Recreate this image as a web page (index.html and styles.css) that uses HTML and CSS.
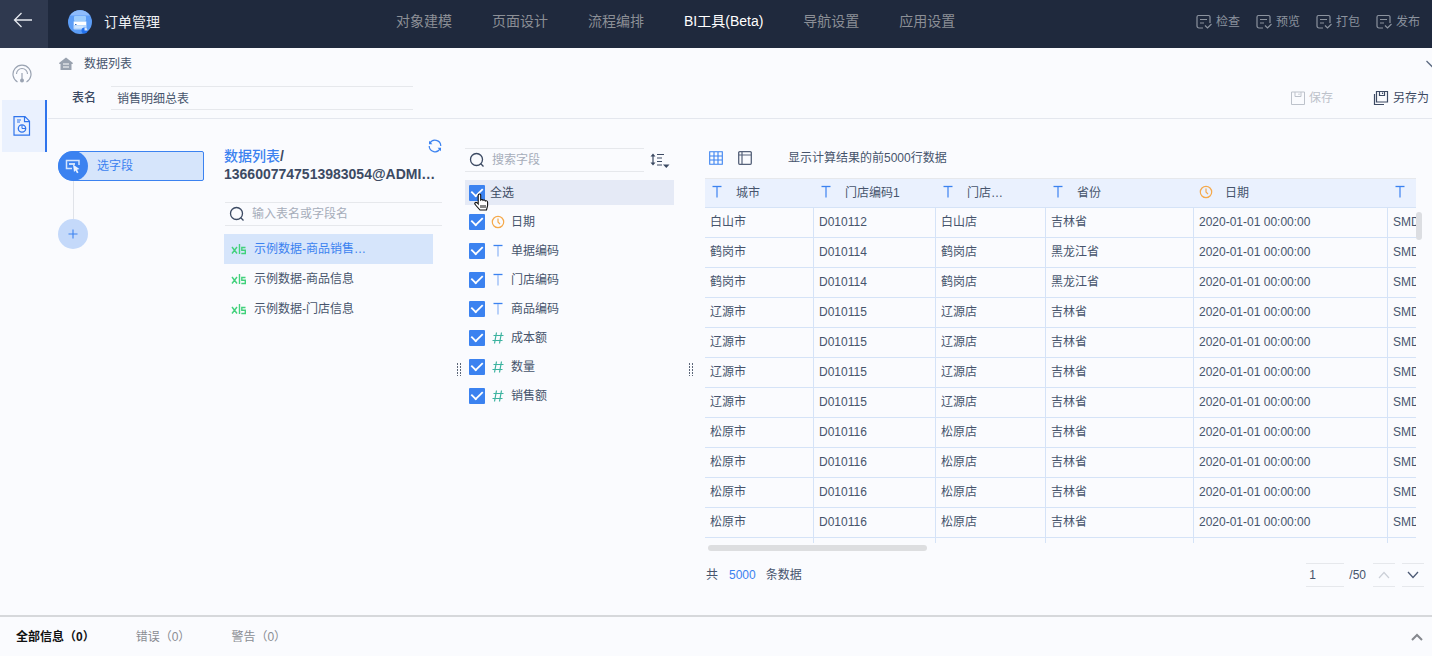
FILE: index.html
```html
<!DOCTYPE html>
<html lang="zh-CN">
<head>
<meta charset="utf-8">
<title>订单管理</title>
<link rel="stylesheet" href="styles.css">
</head>
<body>
<svg class="sprite" aria-hidden="true">
  <symbol id="i-check" viewBox="0 0 16 16"><path d="M7 14H3a2 2 0 0 1-2-2V3a1.500 1.500 0 0 1 1.500-1.500H12.500A1.500 1.500 0 0 1 14 3v6M4 5.500h7M4 9h4M9 11.500l2.500 2.500 4-4" fill="none" stroke="currentColor" stroke-width="1.200"/></symbol>
  <symbol id="i-t" viewBox="0 0 14 14"><path d="M2.500 1.500h9" stroke="#3b82f0" stroke-width="1.300"/><path d="M7 2V12.500" stroke="currentColor" stroke-width="1.200"/></symbol>
  <symbol id="i-hash" viewBox="0 0 14 14"><path d="M5.500 1.500l-2 11M10.500 1.500l-2 11M2.500 4.500h10M1.500 9.500h10" fill="none" stroke="#3db3a0" stroke-width="1.200"/></symbol>
  <symbol id="i-clock" viewBox="0 0 14 14"><circle cx="7" cy="7" r="5.700" fill="none" stroke="#f5a94b" stroke-width="1.200"/><path d="M7 3.500V7l2 2.200" fill="none" stroke="#f5a94b" stroke-width="1.200"/></symbol>
  <symbol id="i-search" viewBox="0 0 16 16"><circle cx="7.500" cy="7.500" r="6" fill="none" stroke="#3c4a63" stroke-width="1.300"/><path d="M11.800 11.800L14.500 14.500" stroke="#3c4a63" stroke-width="1.300"/></symbol>
  <symbol id="i-xls" viewBox="0 0 16 14"><path d="M1 5l5 6.500M6 5L1 11.500M8.500 2v10M14.500 5.500h-3.700v2.800h3.500v3.200h-4" fill="none" stroke="#42d17c" stroke-width="1.400"/></symbol>
</svg>

<header class="topbar">
  <div class="brand">
    <button class="back" aria-label="返回"><svg width="20" height="16" viewBox="0 0 20 16"><path d="M19 8H1.500M8.500 1L1.500 8l7 7" fill="none" stroke="#e6e9ef" stroke-width="1.300"/></svg></button>
    <svg class="logo" width="24" height="24" viewBox="0 0 24 24"><circle cx="12" cy="12" r="12" fill="#5c9df6"/><path d="M2 5.500a12 12 0 0 1 20 0z" fill="#8ebcfb"/><rect x="6" y="6" width="12" height="5" rx="1" fill="#9cccfc"/><rect x="5.500" y="11" width="13" height="8.500" rx="1" fill="#b9d9fd"/><path d="M6 13.500h12" stroke="#fff" stroke-width="3"/><path d="M7 14.500h1.500" stroke="#3b6fc4"/><path d="M6.500 17h9" stroke="#e6f2ff"/><circle cx="16.500" cy="20.500" r="3" fill="#2271ee"/><path d="M16.500 20.500v-3a3 3 0 0 1 3 3z" fill="#d8e8ff"/></svg>
    <span class="app-name">订单管理</span>
  </div>
  <nav class="nav">
    <a href="#">对象建模</a><a href="#">页面设计</a><a href="#">流程编排</a><a href="#" class="active">BI工具(Beta)</a><a href="#">导航设置</a><a href="#">应用设置</a>
  </nav>
  <div class="actions">
    <button><svg width="16" height="16"><use href="#i-check"/></svg>检查</button>
    <button><svg width="16" height="16"><use href="#i-check"/></svg>预览</button>
    <button><svg width="16" height="16"><use href="#i-check"/></svg>打包</button>
    <button><svg width="16" height="16"><use href="#i-check"/></svg>发布</button>
  </div>
</header>

<div class="body">
  <aside class="rail">
    <button aria-label="仪表盘"><svg width="20" height="20" viewBox="0 0 20 20"><path d="M5.500 18a9 9 0 1 1 9 0" fill="none" stroke="#9aa3b2" stroke-width="1.200"/><path d="M4.500 10a5.500 5.500 0 0 1 11 0" fill="none" stroke="#9aa3b2" stroke-width="1.100"/><path d="M10 9v7" stroke="#9aa3b2" stroke-width="1.200"/><circle cx="10" cy="16.500" r="2" fill="#9aa3b2"/></svg></button>
    <button class="current" aria-label="数据报表"><svg width="18" height="20" viewBox="0 0 18 20"><path d="M1 .7h11l4.500 4.500v14H1zM11.500 1v4.700h5M4 4h4M4 6h3" fill="none" stroke="#2f74ec" stroke-width="1.200"/><circle cx="9" cy="12.500" r="3.700" fill="none" stroke="#2f74ec" stroke-width="1.300"/><path d="M9 9v3.500h3.500" fill="none" stroke="#2f74ec"/></svg></button>
  </aside>

  <main class="content">
    <div class="crumb">
      <svg width="14" height="14" viewBox="0 0 14 14"><path d="M7 .5L14 6l-.5 1H12.500v6h-11V7H.5L0 6z" fill="#99a2af"/><path d="M4 7h6M4 10h6" fill="none" stroke="#fff"/></svg>
      <a href="#">数据列表</a>
      <svg class="crumb-more" width="6" height="8" viewBox="0 0 6 8"><path d="M.5 1l6 6" stroke="#5b6980" stroke-width="1.300"/></svg>
    </div>
    <div class="titlebar">
      <label for="tname">表名</label>
      <input id="tname" class="ruled" value="销售明细总表">
      <div class="save-group">
        <button class="save" disabled><svg width="14" height="14" viewBox="0 0 14 14"><path d="M.5 1h13v12.500H.5zM4 1v4.500h6V1M8 2.500v1.500" fill="none" stroke="currentColor"/></svg>保存</button>
        <button class="saveas"><svg width="16" height="16" viewBox="0 0 16 16"><path d="M3.500 1.500h11v10.500H3.500zM6.500 1.500v4h5v-4M9.500 2.500v1.500M1.500 4v10.500h9.500" fill="none" stroke="currentColor" stroke-width="1.200"/></svg>另存为</button>
      </div>
    </div>

    <div class="panels">
      <section class="steps">
        <button class="step"><span class="step-icon"><svg width="16" height="16" viewBox="0 0 16 16"><path d="M7 10.500H1.500V2.500h12.500V7" fill="none" stroke="#d5e5fd" stroke-width="1.500"/><path d="M4 6h6" stroke="#fff" stroke-width="1.500"/><path d="M8 6.500l6.500 4.500-2.500.7 1.500 2.800-1.500.8-1.500-2.800L9 14z" fill="#eaf2ff"/></svg></span>选字段</button>
        <span class="step-line"></span>
        <button class="step-add" aria-label="添加步骤"><svg width="10" height="10" viewBox="0 0 10 10"><path d="M5 .5v9M.5 5h9" stroke="#3b82f0" stroke-width="1.100"/></svg></button>
      </section>

      <section class="sources">
        <div class="source-head">
          <h2><a href="#">数据列表</a>/<span>1366007747513983054@ADMI…</span></h2>
          <button aria-label="刷新"><svg width="14" height="14" viewBox="0 0 14 14"><path d="M1.800 4.500A5.800 5.800 0 0 1 12.800 7M12.200 9.500A5.800 5.800 0 0 1 1.200 7M4.500 1.700" fill="none" stroke="#3b82f0" stroke-width="1.200"/><path d="M1 1.800v3.400h3.400zM13 12.200V8.800H9.600z" fill="#3b82f0"/></svg></button>
        </div>
        <label class="search ruled"><svg width="16" height="16"><use href="#i-search"/></svg><input type="text" placeholder="输入表名或字段名" aria-label="输入表名或字段名"></label>
        <ul class="files">
          <li><button class="picked"><svg width="16" height="14"><use href="#i-xls"/></svg>示例数据-商品销售…</button></li>
          <li><button><svg width="16" height="14"><use href="#i-xls"/></svg>示例数据-商品信息</button></li>
          <li><button><svg width="16" height="14"><use href="#i-xls"/></svg>示例数据-门店信息</button></li>
        </ul>
      </section>

      <div class="grip"><i></i></div>

      <section class="fields">
        <div class="field-tools">
          <label class="search ruled"><svg width="16" height="16"><use href="#i-search"/></svg><input type="text" placeholder="搜索字段" aria-label="搜索字段"></label>
          <button aria-label="排序"><svg width="20" height="16" viewBox="0 0 20 16"><path d="M3 3v9M7 2.500h7M7 6h5M7 9.500h5M7 13h5" stroke="#3c4a63" stroke-width="1.200"/><path d="M.5 4.500L3 1.500l2.500 3zM.5 10.500l2.500 3 2.500-3zM13 12.500h6.500l-3.200 3.500z" fill="#3c4a63"/></svg></button>
        </div>
        <label class="all"><input type="checkbox" checked>全选
          <svg class="cursor" width="16" height="18" viewBox="0 0 16 18"><path d="M4.200 10V2.200a1.200 1.200 0 0 1 2.500 0V7c.8-.8 2-.6 2.300.3.800-.6 2-.3 2.300.6.900-.5 2.300 0 2.300 1.300v3.500L12.500 17H6L2 12.500c-1.200-1.300-1.700-2.200-.8-2.800.8-.6 1.800-.2 3 1.300z" fill="#fff" stroke="#111" stroke-width="1.100"/><path d="M7 12v3M9 12v3M11 12v3" stroke="#111"/></svg>
        </label>
        <ul class="field-list">
          <li><label><input type="checkbox" checked><svg width="14" height="14"><use href="#i-clock"/></svg>日期</label></li>
          <li><label><input type="checkbox" checked><svg width="14" height="14"><use href="#i-t"/></svg>单据编码</label></li>
          <li><label><input type="checkbox" checked><svg width="14" height="14"><use href="#i-t"/></svg>门店编码</label></li>
          <li><label><input type="checkbox" checked><svg width="14" height="14"><use href="#i-t"/></svg>商品编码</label></li>
          <li><label><input type="checkbox" checked><svg width="14" height="14"><use href="#i-hash"/></svg>成本额</label></li>
          <li><label><input type="checkbox" checked><svg width="14" height="14"><use href="#i-hash"/></svg>数量</label></li>
          <li><label><input type="checkbox" checked><svg width="14" height="14"><use href="#i-hash"/></svg>销售额</label></li>
        </ul>
      </section>

      <div class="grip"><i></i></div>

      <section class="preview">
        <div class="view-tools">
          <button aria-label="表格视图"><svg width="14" height="14" viewBox="0 0 14 14"><path d="M.7.7h12.600v12.600H.7zM.7 5h12.600M.7 9h12.600M5 .7v12.600M9 .7v12.600" fill="none" stroke="#3b82f0" stroke-width="1.100"/></svg></button>
          <button aria-label="结构视图"><svg width="14" height="14" viewBox="0 0 14 14"><rect x=".7" y=".7" width="12.600" height="12.600" rx="1" fill="none" stroke="#56627a" stroke-width="1.300"/><path d="M.7 4h12.600M4 .7v12.600" stroke="#56627a" stroke-width="1.200"/></svg></button>
          <span>显示计算结果的前5000行数据</span>
        </div>
        <div class="table-view">
          <table>
            <colgroup><col class="c-city"><col class="c-code"><col class="c-store"><col class="c-prov"><col class="c-date"><col class="c-sku"></colgroup>
            <thead><tr>
              <th><svg width="14" height="14"><use href="#i-t"/></svg>城市</th>
              <th><svg width="14" height="14"><use href="#i-t"/></svg>门店编码1</th>
              <th><svg width="14" height="14"><use href="#i-t"/></svg>门店…</th>
              <th><svg width="14" height="14"><use href="#i-t"/></svg>省份</th>
              <th><svg width="14" height="14"><use href="#i-clock"/></svg>日期</th>
              <th><svg width="14" height="14"><use href="#i-t"/></svg></th>
            </tr></thead>
            <tbody>
              <tr><td>白山市</td><td>D010112</td><td>白山店</td><td>吉林省</td><td>2020-01-01 00:00:00</td><td>SMD</td></tr>
              <tr><td>鹤岗市</td><td>D010114</td><td>鹤岗店</td><td>黑龙江省</td><td>2020-01-01 00:00:00</td><td>SMD</td></tr>
              <tr><td>鹤岗市</td><td>D010114</td><td>鹤岗店</td><td>黑龙江省</td><td>2020-01-01 00:00:00</td><td>SMD</td></tr>
              <tr><td>辽源市</td><td>D010115</td><td>辽源店</td><td>吉林省</td><td>2020-01-01 00:00:00</td><td>SMD</td></tr>
              <tr><td>辽源市</td><td>D010115</td><td>辽源店</td><td>吉林省</td><td>2020-01-01 00:00:00</td><td>SMD</td></tr>
              <tr><td>辽源市</td><td>D010115</td><td>辽源店</td><td>吉林省</td><td>2020-01-01 00:00:00</td><td>SMD</td></tr>
              <tr><td>辽源市</td><td>D010115</td><td>辽源店</td><td>吉林省</td><td>2020-01-01 00:00:00</td><td>SMD</td></tr>
              <tr><td>松原市</td><td>D010116</td><td>松原店</td><td>吉林省</td><td>2020-01-01 00:00:00</td><td>SMD</td></tr>
              <tr><td>松原市</td><td>D010116</td><td>松原店</td><td>吉林省</td><td>2020-01-01 00:00:00</td><td>SMD</td></tr>
              <tr><td>松原市</td><td>D010116</td><td>松原店</td><td>吉林省</td><td>2020-01-01 00:00:00</td><td>SMD</td></tr>
              <tr><td>松原市</td><td>D010116</td><td>松原店</td><td>吉林省</td><td>2020-01-01 00:00:00</td><td>SMD</td></tr>
              <tr><td></td><td></td><td></td><td></td><td></td><td></td></tr>
            </tbody>
          </table>
        </div>
        <span class="v-thumb"></span>
        <div class="h-track"><span class="h-thumb"></span></div>
        <div class="pager">
          <span>共</span><b>5000</b><span>条数据</span>
          <div class="pages">
            <input class="ruled" value="1" aria-label="页码"><span>/50</span>
            <button class="ruled prev" disabled aria-label="上一页"><svg width="12" height="8" viewBox="0 0 12 8"><path d="M1 7l5-5.500L11 7" fill="none" stroke="#ccd0d8" stroke-width="1.200"/></svg></button>
            <button class="ruled" aria-label="下一页"><svg width="12" height="8" viewBox="0 0 12 8"><path d="M1 1l5 5.500L11 1" fill="none" stroke="#4d5b75" stroke-width="1.300"/></svg></button>
          </div>
        </div>
      </section>
    </div>
  </main>
</div>

<footer class="messages">
  <button class="active">全部信息（0）</button><button>错误（0）</button><button>警告（0）</button>
  <button class="expand" aria-label="展开"><svg width="12" height="8" viewBox="0 0 12 8"><path d="M1 7l5-5 5 5" fill="none" stroke="#85888e" stroke-width="2"/></svg></button>
</footer>
</body>
</html>
```

FILE: styles.css
```css
* { box-sizing: border-box; }

body {
  margin: 0;
  height: 100vh;
  display: flex;
  flex-direction: column;
  overflow: hidden;
  background: #fafbfe;
  color: #46546c;
  font: 12px/18px "Liberation Sans", "Noto Sans CJK SC", sans-serif;
}

button, input {
  font: inherit;
  color: inherit;
  background: none;
  border: 0;
  padding: 0;
  margin: 0;
  outline: 0;
}
button { display: flex; align-items: center; white-space: nowrap; }
a { color: inherit; text-decoration: none; }
ul { list-style: none; margin: 0; padding: 0; }
svg { display: block; flex: none; }
.sprite { position: absolute; width: 0; height: 0; }

.ruled {
  border-top: 1px solid #e6e8ec;
  border-bottom: 1px solid #e6e8ec;
  height: 24px;
}

/* Top bar */
.topbar {
  flex: none;
  height: 48px;
  display: flex;
  align-items: center;
  background: #1f293d;
  padding-right: 12px;
}
.brand { flex: 0 0 396px; display: flex; align-items: center; align-self: stretch; color: #eef0f4; font-size: 14px; }
.back { width: 48px; align-self: stretch; justify-content: center; padding: 0 2px 8px 0; background: #2f394f; }
.logo { margin: 0 12px 4px 20px; }
.app-name { padding-bottom: 4px; }
.nav { display: flex; gap: 40px; padding-bottom: 6px; font-size: 14px; color: #8c8f96; white-space: nowrap; }
.nav .active { color: #fff; }
.actions { display: flex; gap: 16px; margin-left: auto; padding-bottom: 4px; color: #8b929e; }
.actions button { gap: 4px; }

/* Body */
.body { flex: 1; min-height: 0; display: flex; }
.rail { flex: 0 0 48px; padding-left: 2px; }
.rail button { width: 45px; height: 52px; justify-content: center; padding-right: 5px; }
.rail .current { background: #eaf1fe; border-right: 2px solid #2f74ec; padding-right: 3px; }
.content { flex: 1; min-width: 0; display: flex; flex-direction: column; }
.crumb { display: flex; align-items: center; height: 32px; padding-left: 11px; gap: 11px; }
.crumb-more { margin-left: auto; }

.titlebar {
  display: flex;
  align-items: center;
  height: 39px;
  padding: 0 3px 2px 24px;
  border-bottom: 1px solid #e4e7ee;
}
.titlebar label { font-weight: 500; color: #3c4a63; width: 39px; }
.titlebar input { width: 302px; padding: 0 0 2px 6px; }
.save-group { display: flex; gap: 40px; margin-left: auto; }
.save-group button { gap: 4px; }
.save { color: #bdc2cb; }
.saveas { color: #3c4a63; }

.panels { flex: 1; min-height: 0; display: flex; }

/* Steps */
.steps { flex: 0 0 176px; padding: 32px 20px 0 10px; }
.step { width: 100%; height: 30px; gap: 9px; color: #3b82f0; background: #d6e5fb; border: 1px solid #3b82f0; border-radius: 15px 2px 2px 15px; }
.step-icon { width: 30px; height: 30px; margin-left: -1px; display: grid; place-items: center; border-radius: 50%; background: #3b82f0; }
.step-line { display: block; width: 1px; height: 38px; margin-left: 15px; background: #e0e3e9; }
.step-add { width: 30px; height: 30px; justify-content: center; border-radius: 50%; background: #c4d9fa; }

/* Sources */
.sources { flex: 0 0 218px; padding-top: 20px; }
.source-head { position: relative; padding-top: 8px; height: 63px; }
.source-head h2 { margin: 0; font-size: 14px; line-height: 18px; color: #3c4a63; white-space: nowrap; }
.source-head h2 a { color: #3b82f0; font-weight: 500; }
.source-head h2 span { display: block; }
.source-head button { position: absolute; right: 0; top: 0; }
.search { display: flex; align-items: center; gap: 7px; padding-left: 4px; }
.search input { flex: 1; min-width: 0; }
.search input::placeholder { color: #a6adba; opacity: 1; }
.sources .search { margin-left: 1px; }
.files { padding: 8px 9px 0 0; }
.files button { width: 100%; height: 30px; padding-left: 7px; gap: 7px; }
.files .picked { background: #d6e5fb; color: #3b82f0; }

.grip { flex: 0 0 23px; padding: 244px 0 0 15px; }
.grip i {
  display: block;
  width: 4px;
  height: 13px;
  background:
    linear-gradient(#5b6678 2px, transparent 2px) left top / 1px 3px repeat-y,
    linear-gradient(#5b6678 2px, transparent 2px) right top / 1px 3px repeat-y;
}

/* Fields */
.fields { flex: 0 0 209px; padding-top: 29px; }
.field-tools { display: flex; align-items: center; gap: 6px; margin-bottom: 8px; }
.field-tools .search { width: 179px; }
.all { position: relative; display: flex; align-items: center; gap: 5px; height: 25px; padding-left: 4px; background: #e5eaf6; color: #3c4a63; }
.cursor { position: absolute; left: 9px; top: 13px; }
.field-list { padding-top: 2px; }
.field-list label { display: flex; align-items: center; height: 29px; padding-left: 4px; gap: 6px; }
.field-list svg { color: #8db5f5; }
input[type="checkbox"] {
  appearance: none;
  width: 16px;
  height: 16px;
  border-radius: 1px;
  background: #3b82f0;
  display: grid;
  place-items: center;
}
input[type="checkbox"]:checked::before {
  content: "";
  width: 10px;
  height: 6px;
  border: solid #fff;
  border-width: 0 0 2px 2px;
  transform: rotate(-45deg) scale(0.9);
  margin-bottom: 3px;
}

/* Preview */
.preview { position: relative; flex: 1; min-width: 0; display: flex; flex-direction: column; padding: 27px 16px 28px 8px; }
.view-tools { display: flex; align-items: center; height: 24px; gap: 15px; padding-left: 4px; margin-bottom: 8px; }
.view-tools span { margin-left: 21px; }
.table-view { flex: 1; min-height: 0; overflow: hidden; }
table { width: 803px; table-layout: fixed; border-collapse: separate; border-spacing: 0; }
.c-city { width: 109px; }
.c-code { width: 122px; }
.c-store { width: 110px; }
.c-prov { width: 148px; }
.c-date { width: 194px; }
.c-sku { width: 120px; }
th, td { height: 30px; padding: 0 5px; text-align: left; font-weight: 400; border-bottom: 1px solid #d5e3f7; white-space: nowrap; }
th { background: #eaf1fe; border-top: 1px solid #e6e8ec; }
th svg { display: inline-block; vertical-align: -2px; margin-right: 12px; color: #3b82f0; }
td { border-right: 1px solid #d5e3f7; }
tbody td { padding-bottom: 1px; }
.v-thumb { position: absolute; right: 10px; top: 93px; width: 6px; height: 28px; border-radius: 3px; background: #dcdee2; }
.h-track { padding: 2px 3px 0; }
.h-thumb { display: block; width: 31%; height: 6px; border-radius: 3px; background: #dddee0; }
.pager { display: flex; align-items: center; height: 24px; margin-top: 12px; padding-left: 1px; }
.pager b { font-weight: 400; color: #3b82f0; margin: 0 10px 0 11px; }
.pages { display: flex; align-items: center; margin-left: auto; margin-right: -8px; }
.pages input { width: 38px; padding-left: 3px; margin-right: 5px; }
.pages button { width: 22px; justify-content: center; margin-left: 7px; }

/* Messages */
.messages {
  flex: none;
  display: flex;
  align-items: center;
  height: 41px;
  gap: 41px;
  padding: 0 9px 0 16px;
  border-top: 2px solid #d6d8db;
  color: #8a8d93;
}
.messages .active { color: #111; font-weight: 700; }
.messages .expand { margin-left: auto; }
```
